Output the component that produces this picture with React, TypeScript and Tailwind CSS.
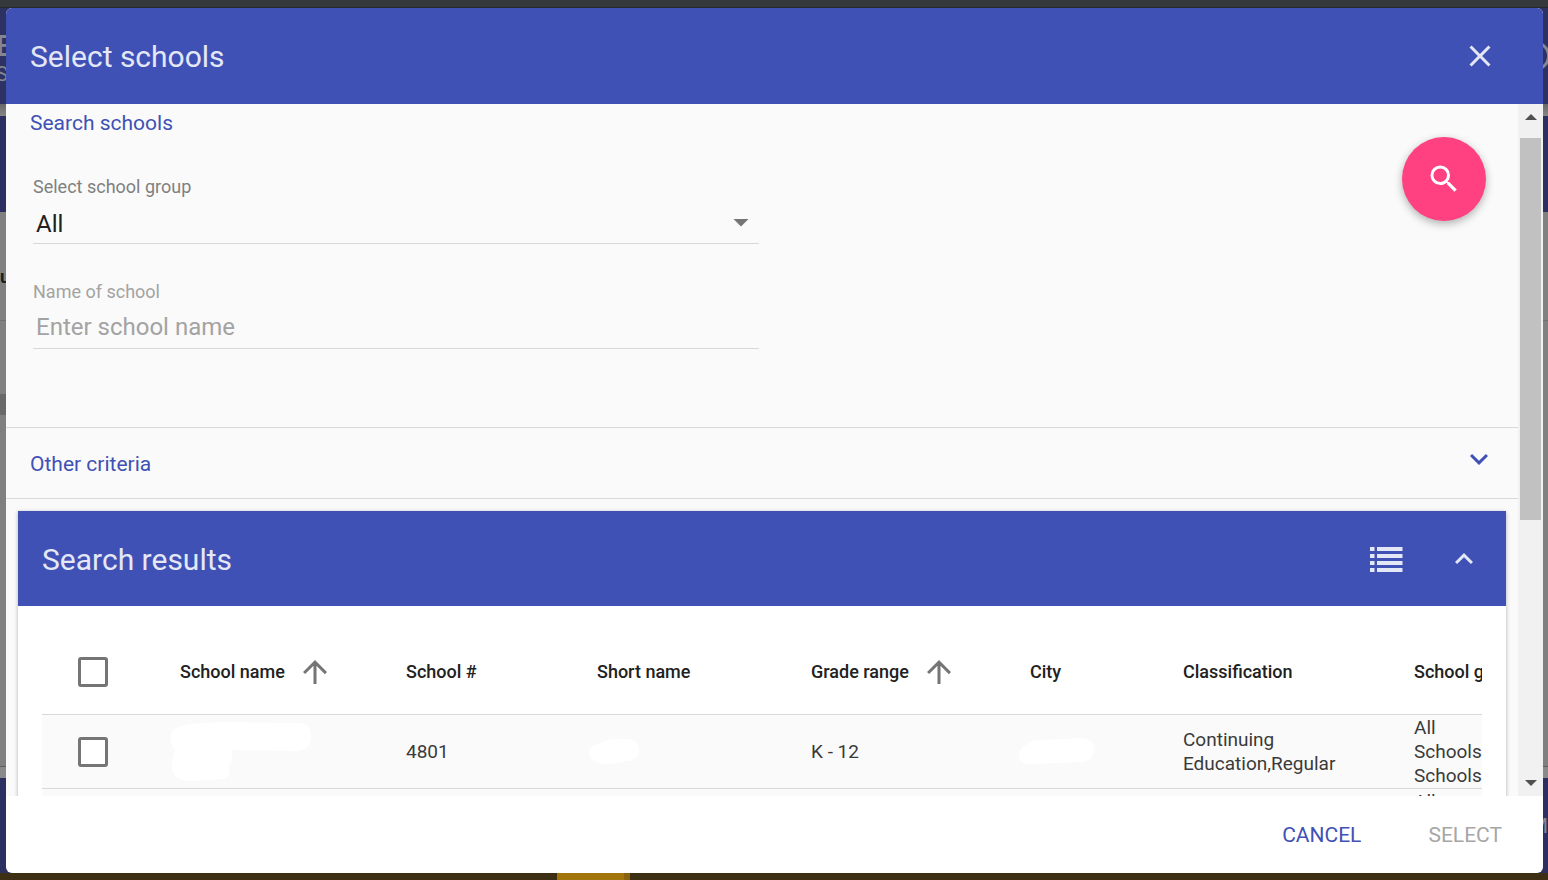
import { useState } from "react";
import {
  MdArrowDropDown,
  MdArrowUpward,
  MdClose,
  MdExpandLess,
  MdExpandMore,
  MdSearch,
} from "react-icons/md";

function Backdrop() {
  return (
    <div aria-hidden="true" className="flex h-full flex-col bg-[#808080]">
      <div className="h-2 shrink-0 border-b border-[#26282a] bg-[#35393b]" />
      <div className="flex h-24 shrink-0 justify-between overflow-hidden bg-[#2d3262] text-[#85868f]">
        <div className="pt-[22px]">
          <div className="-ml-1 text-[30px] leading-[32px] font-medium">E</div>
          <div className="-ml-1 text-[20px] leading-[24px]">S</div>
        </div>
        <div className="mt-[33px] -mr-[2px] h-[30px] w-[30px] rounded-full border-3 border-[#85868f]" />
      </div>
      <div className="h-3 shrink-0 bg-linear-to-b from-[#686868] to-[#868686]" />
      <div className="h-24 shrink-0 bg-[#2b3060]" />
      <div className="h-[109px] shrink-0 border-b border-[#707070] pt-[53px]">
        <div className="text-[18px] leading-[24px] font-bold text-[#1c1c1c]">u</div>
      </div>
      <div className="h-[73px] shrink-0" />
      <div className="flex h-[21px] shrink-0">
        <div className="w-1/2 bg-[#696969]" />
      </div>
      <div className="min-h-0 flex-1 border-b border-[#606060]" />
      <div className="h-[11px] shrink-0 bg-[#8a8a8a]" />
      <div className="flex h-[95px] shrink-0 items-center justify-end overflow-hidden bg-[#2b3060] text-[20px] text-[#85868f]">
        <span>M</span>
      </div>
      <div className="flex h-[7px] shrink-0 bg-[#3d2f14]">
        <div className="ml-[36%] w-[73px] border-r-[6px] border-[#8a6210] bg-[#a1740c]" />
      </div>
    </div>
  );
}

function ListIcon() {
  return (
    <svg width="36" height="36" viewBox="0 0 36 36" fill="currentColor" aria-hidden="true">
      <path d="M2 6h4.5v4H2zM9 6h25.500v4H9zM2 13h4.500v4H2zM9 13h25.500v4H9zM2 20h4.500v4H2zM9 20h25.500v4H9zM2 27h4.500v4H2zM9 27h25.500v4H9z" />
    </svg>
  );
}

function NameMask() {
  return (
    <svg width="142" height="60" viewBox="0 0 142 60" fill="#fff" className="-ml-[10px] block" aria-hidden="true">
      <path d="M2 11C6 4 24 2 50 1l78 1c10 0 13 5 13 13 0 9-4 14-14 15l-66-1c3 8 1 14-3 15 3 6 1 12-3 14-12 0-22 2-34 2C8 60 2 54 2 46c0-8 2-12 3-18C1 24-1 17 2 11z" />
    </svg>
  );
}

function ShortMask() {
  return (
    <svg width="52" height="27" viewBox="0 0 52 27" fill="#fff" className="-ml-[9px] block" aria-hidden="true">
      <path d="M1 15C0 8 8 7 13 5 18 0 32 1 41 1c7 1 10 6 10 11 0 7-5 11-13 11-6 1-12 3-22 3C9 26 2 22 1 15z" />
    </svg>
  );
}

function CityMask() {
  return (
    <svg width="77" height="28" viewBox="0 0 77 28" fill="#fff" className="-ml-[12px] block" aria-hidden="true">
      <path d="M1 19C0 12 7 8 14 4c14-2 30-1 44-3 10-1 18 2 18 11 0 8-5 13-14 13L10 27c-5 0-9-3-9-8z" />
    </svg>
  );
}

const box =
  "block h-[30px] w-[30px] appearance-none rounded-[3px] border-3 border-[#757575] bg-white checked:bg-[#757575]";

const headers: { label: string; sort?: boolean }[] = [
  { label: "School name", sort: true },
  { label: "School #" },
  { label: "Short name" },
  { label: "Grade range", sort: true },
  { label: "City" },
  { label: "Classification" },
  { label: "School group" },
];

function ResultsTable() {
  return (
    <div className="overflow-x-auto [scrollbar-width:none]">
      <table className="w-[1560px] table-fixed border-collapse text-left text-[#3a3a3a]">
        <colgroup>
          <col className="w-[138px]" />
          <col className="w-[226px]" />
          <col className="w-[191px]" />
          <col className="w-[214px]" />
          <col className="w-[219px]" />
          <col className="w-[153px]" />
          <col className="w-[231px]" />
          <col />
        </colgroup>
        <thead>
          <tr className="h-[84px] border-b border-[#d9d9d9]">
            <th className="pl-9">
              <input type="checkbox" aria-label="Select all schools" className={box} />
            </th>
            {headers.map((h) => (
              <th key={h.label} className="p-0 text-[18px] leading-6 font-medium whitespace-nowrap text-[#212121]">
                {h.sort ? (
                  <button type="button" className="flex items-center gap-3">
                    {h.label}
                    <MdArrowUpward className="size-9 text-[#757575]" />
                  </button>
                ) : (
                  h.label
                )}
              </th>
            ))}
          </tr>
        </thead>
        <tbody className="text-[19px] leading-6">
          <tr className="h-[74px] border-b border-[#d9d9d9] bg-[#fafafa]">
            <td className="pt-px pl-9">
              <input type="checkbox" aria-label="Select school 4801" className={box} />
            </td>
            <td><NameMask /></td>
            <td className="pt-px">4801</td>
            <td><ShortMask /></td>
            <td className="pt-px">K - 12</td>
            <td><CityMask /></td>
            <td className="pt-px pr-[60px]">Continuing Education,Regular</td>
            <td className="pt-px pr-[104px]">All Schools Schools</td>
          </tr>
          <tr className="h-[74px] border-b border-[#d9d9d9] bg-[#fafafa]">
            <td colSpan={7} />
            <td className="pt-px pr-[104px]">All Schools Schools</td>
          </tr>
        </tbody>
      </table>
    </div>
  );
}

function Scrollbar() {
  return (
    <div className="flex w-[25px] shrink-0 flex-col bg-[#f1f1f1] px-[2px]">
      <button type="button" aria-label="Scroll up" className="flex h-[34px] items-center justify-center pb-2">
        <svg width="12" height="6" viewBox="0 0 12 6" fill="#505050"><path d="M0 6 6 0l6 6z" /></svg>
      </button>
      <div className="flex-1">
        <div className="h-[61%] bg-[#c1c1c1]" />
      </div>
      <button type="button" aria-label="Scroll down" className="flex h-[32px] items-center justify-center pt-[6px]">
        <svg width="12" height="6" viewBox="0 0 12 6" fill="#505050"><path d="M0 0h12L6 6z" /></svg>
      </button>
    </div>
  );
}

export default function App() {
  const [name, setName] = useState("");
  return (
    <div className="relative h-screen overflow-hidden font-[Roboto,sans-serif]">
      <Backdrop />
      <div className="absolute inset-0 flex pt-2 pr-[5px] pb-[7px] pl-[6px]">
        <div
          role="dialog"
          aria-labelledby="dialog-title"
          className="flex min-w-0 flex-1 flex-col overflow-hidden rounded-[6px] bg-white"
        >
          <header className="flex h-24 shrink-0 items-center justify-between bg-[#3f51b5] pr-[45px] pl-6 text-[#e4e7f6]">
            <h1 id="dialog-title" className="pt-[2px] text-[30px] leading-9">Select schools</h1>
            <button type="button" aria-label="Close">
              <MdClose className="size-9" />
            </button>
          </header>

          <div className="flex min-h-0 flex-1">
            <main className="min-w-0 flex-1 overflow-y-auto bg-[#fafafa] [scrollbar-width:none]">
              <section className="flex h-[324px] justify-between border-b border-[#d9d9d9]">
                <div className="w-1/2 pt-[6px] pr-[3px] pl-6">
                  <h2 className="text-[21px] leading-[26px] text-[#3f51b5]">Search schools</h2>
                  <div className="pt-[39px] pl-[3px]">
                    <label htmlFor="group" className="block text-[18px] leading-6 text-[#808080]">
                      Select school group
                    </label>
                    <div className="relative border-b border-[#d9d9d9]">
                      <select
                        id="group"
                        className="block h-11 w-full appearance-none bg-transparent pt-[6px] pl-[3px] text-[24px] leading-[30px] text-[#212121]"
                      >
                        <option>All</option>
                      </select>
                      <MdArrowDropDown className="pointer-events-none absolute top-[5px] right-0 size-9 text-[#757575]" />
                    </div>
                    <label htmlFor="school" className="mt-9 block text-[18px] leading-6 text-[#a3a3a3]">
                      Name of school
                    </label>
                    <input
                      id="school"
                      value={name}
                      onChange={(e) => setName(e.target.value)}
                      placeholder="Enter school name"
                      className="block h-[45px] w-full border-b border-[#d9d9d9] bg-transparent pt-[2px] pl-[3px] text-[24px] leading-[30px] text-[#212121] outline-none placeholder:text-[#a3a3a3]"
                    />
                  </div>
                </div>
                <button
                  type="button"
                  aria-label="Search"
                  className="mt-[33px] mr-8 flex size-[84px] items-center justify-center rounded-full bg-[#ff4081] text-white shadow-[0_3px_8px_rgba(0,0,0,0.3)]"
                >
                  <MdSearch className="size-9" />
                </button>
              </section>

              <section className="flex h-[71px] items-center justify-between border-b border-[#d9d9d9] pr-[21px] pl-6 text-[#3f51b5]">
                <h2 className="pt-[2px] text-[21px] leading-[26px]">Other criteria</h2>
                <button type="button" aria-label="Show other criteria" className="pb-2">
                  <MdExpandMore className="size-9" />
                </button>
              </section>

              <section className="m-3 bg-white shadow-[0_1px_4px_rgba(0,0,0,0.3)]">
                <div className="flex h-[95px] items-center justify-between bg-[#3f51b5] pr-6 pl-6 text-[#e4e7f6]">
                  <h2 className="pt-[2px] text-[30px] leading-9">Search results</h2>
                  <div className="flex gap-[42px]">
                    <button type="button" aria-label="Choose columns">
                      <ListIcon />
                    </button>
                    <button type="button" aria-label="Collapse results">
                      <MdExpandLess className="size-9" />
                    </button>
                  </div>
                </div>
                <div className="p-6">
                  <ResultsTable />
                </div>
              </section>
            </main>
            <Scrollbar />
          </div>

          <footer className="flex h-[77px] shrink-0 items-center justify-end gap-[67px] pr-[41px] text-[21px] leading-6">
            <button type="button" className="text-[#3f51b5]">CANCEL</button>
            <button type="button" disabled className="text-[#a6a6a6]">SELECT</button>
          </footer>
        </div>
      </div>
    </div>
  );
}
